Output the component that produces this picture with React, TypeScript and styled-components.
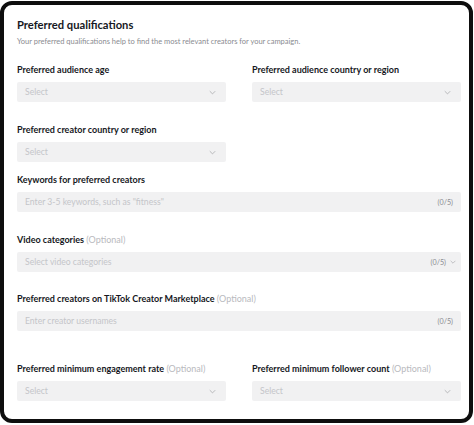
import React from "react";
import styled, { createGlobalStyle } from "styled-components";

const Global = createGlobalStyle`
  html, body { margin: 0; padding: 0; background: #ffffff; }
  body { font-family: Lato, "Liberation Sans", sans-serif; -webkit-font-smoothing: antialiased; }
`;

const Card = styled.div`
  box-sizing: border-box;
  width: 473px;
  height: 422px;
  margin-top: 1px;
  border: 4px solid #0e0e0e;
  border-radius: 12px;
  background: #ffffff;
  padding: 12px 8px 0 13px;
`;

const Title = styled.h2`
  margin: 0;
  font-size: 11.2px;
  line-height: 15px;
  font-weight: 700;
  color: #161823;
`;

const Subtitle = styled.p`
  margin: 5px 0 0;
  font-size: 7.5px;
  line-height: 10px;
  color: #8a8b91;
`;

const Row = styled.div<{ $top: number; $cols: number }>`
  display: grid;
  grid-template-columns: ${(p) => (p.$cols === 2 ? "1fr 1fr" : "1fr")};
  column-gap: 26px;
  margin-top: ${(p) => p.$top}px;
`;

const Item = styled.div`
  display: flex;
  flex-direction: column;
  gap: 6px;
`;

const Label = styled.div`
  font-size: 9px;
  line-height: 12px;
  font-weight: 700;
  color: #161823;
  white-space: nowrap;
`;

const Optional = styled.span`
  font-weight: 400;
  color: #b9babe;
`;

const Control = styled.div<{ $pr?: number }>`
  box-sizing: border-box;
  height: 20px;
  display: flex;
  align-items: center;
  padding: 0 ${(p) => p.$pr ?? 8}px 0 8px;
  background: #f1f1f2;
  border-radius: 2px;
`;

const Placeholder = styled.span`
  flex: 1;
  font-size: 8.6px;
  color: #c4c5c9;
  white-space: nowrap;
`;

const Count = styled.span`
  font-size: 7.2px;
  color: #8a8b91;
`;

const Chevron = styled.svg<{ $gap: number }>`
  margin-left: ${(p) => p.$gap}px;
  flex: none;
`;

const ChevronIcon = ({ gap = 0, size = 7 }: { gap?: number; size?: number }) => (
  <Chevron $gap={gap} width={size} height={size} viewBox="0 0 10 10">
    <path d="M1.5 3.5 L5 7 L8.5 3.5" fill="none" stroke="#9fa0a5" strokeWidth="1" strokeLinecap="round" strokeLinejoin="round" />
  </Chevron>
);

const SelectBox = ({ text = "Select" }: { text?: string }) => (
  <Control $pr={10}>
    <Placeholder>{text}</Placeholder>
    <ChevronIcon />
  </Control>
);

const Field = ({ label, optional, children }: { label: string; optional?: boolean; children: React.ReactNode }) => (
  <Item>
    <Label>
      {label}
      {optional && <Optional> (Optional)</Optional>}
    </Label>
    {children}
  </Item>
);

export default function App() {
  return (
    <>
      <Global />
      <Card>
        <Title>Preferred qualifications</Title>
        <Subtitle>Your preferred qualifications help to find the most relevant creators for your campaign.</Subtitle>

        <Row $top={17} $cols={2}>
          <Field label="Preferred audience age">
            <SelectBox />
          </Field>
          <Field label="Preferred audience country or region">
            <SelectBox />
          </Field>
        </Row>

        <Row $top={22} $cols={2}>
          <Field label="Preferred creator country or region">
            <SelectBox />
          </Field>
        </Row>

        <Row $top={12} $cols={1}>
          <Field label="Keywords for preferred creators">
            <Control>
              <Placeholder>Enter 3-5 keywords, such as "fitness"</Placeholder>
              <Count>(0/5)</Count>
            </Control>
          </Field>
        </Row>

        <Row $top={22} $cols={1}>
          <Field label="Video categories" optional>
            <Control $pr={5}>
              <Placeholder>Select video categories</Placeholder>
              <Count>(0/5)</Count>
              <ChevronIcon gap={4} size={6} />
            </Control>
          </Field>
        </Row>

        <Row $top={21} $cols={1}>
          <Field label="Preferred creators on TikTok Creator Marketplace" optional>
            <Control>
              <Placeholder>Enter creator usernames</Placeholder>
              <Count>(0/5)</Count>
            </Control>
          </Field>
        </Row>

        <Row $top={32} $cols={2}>
          <Field label="Preferred minimum engagement rate" optional>
            <SelectBox />
          </Field>
          <Field label="Preferred minimum follower count" optional>
            <SelectBox />
          </Field>
        </Row>
      </Card>
    </>
  );
}
